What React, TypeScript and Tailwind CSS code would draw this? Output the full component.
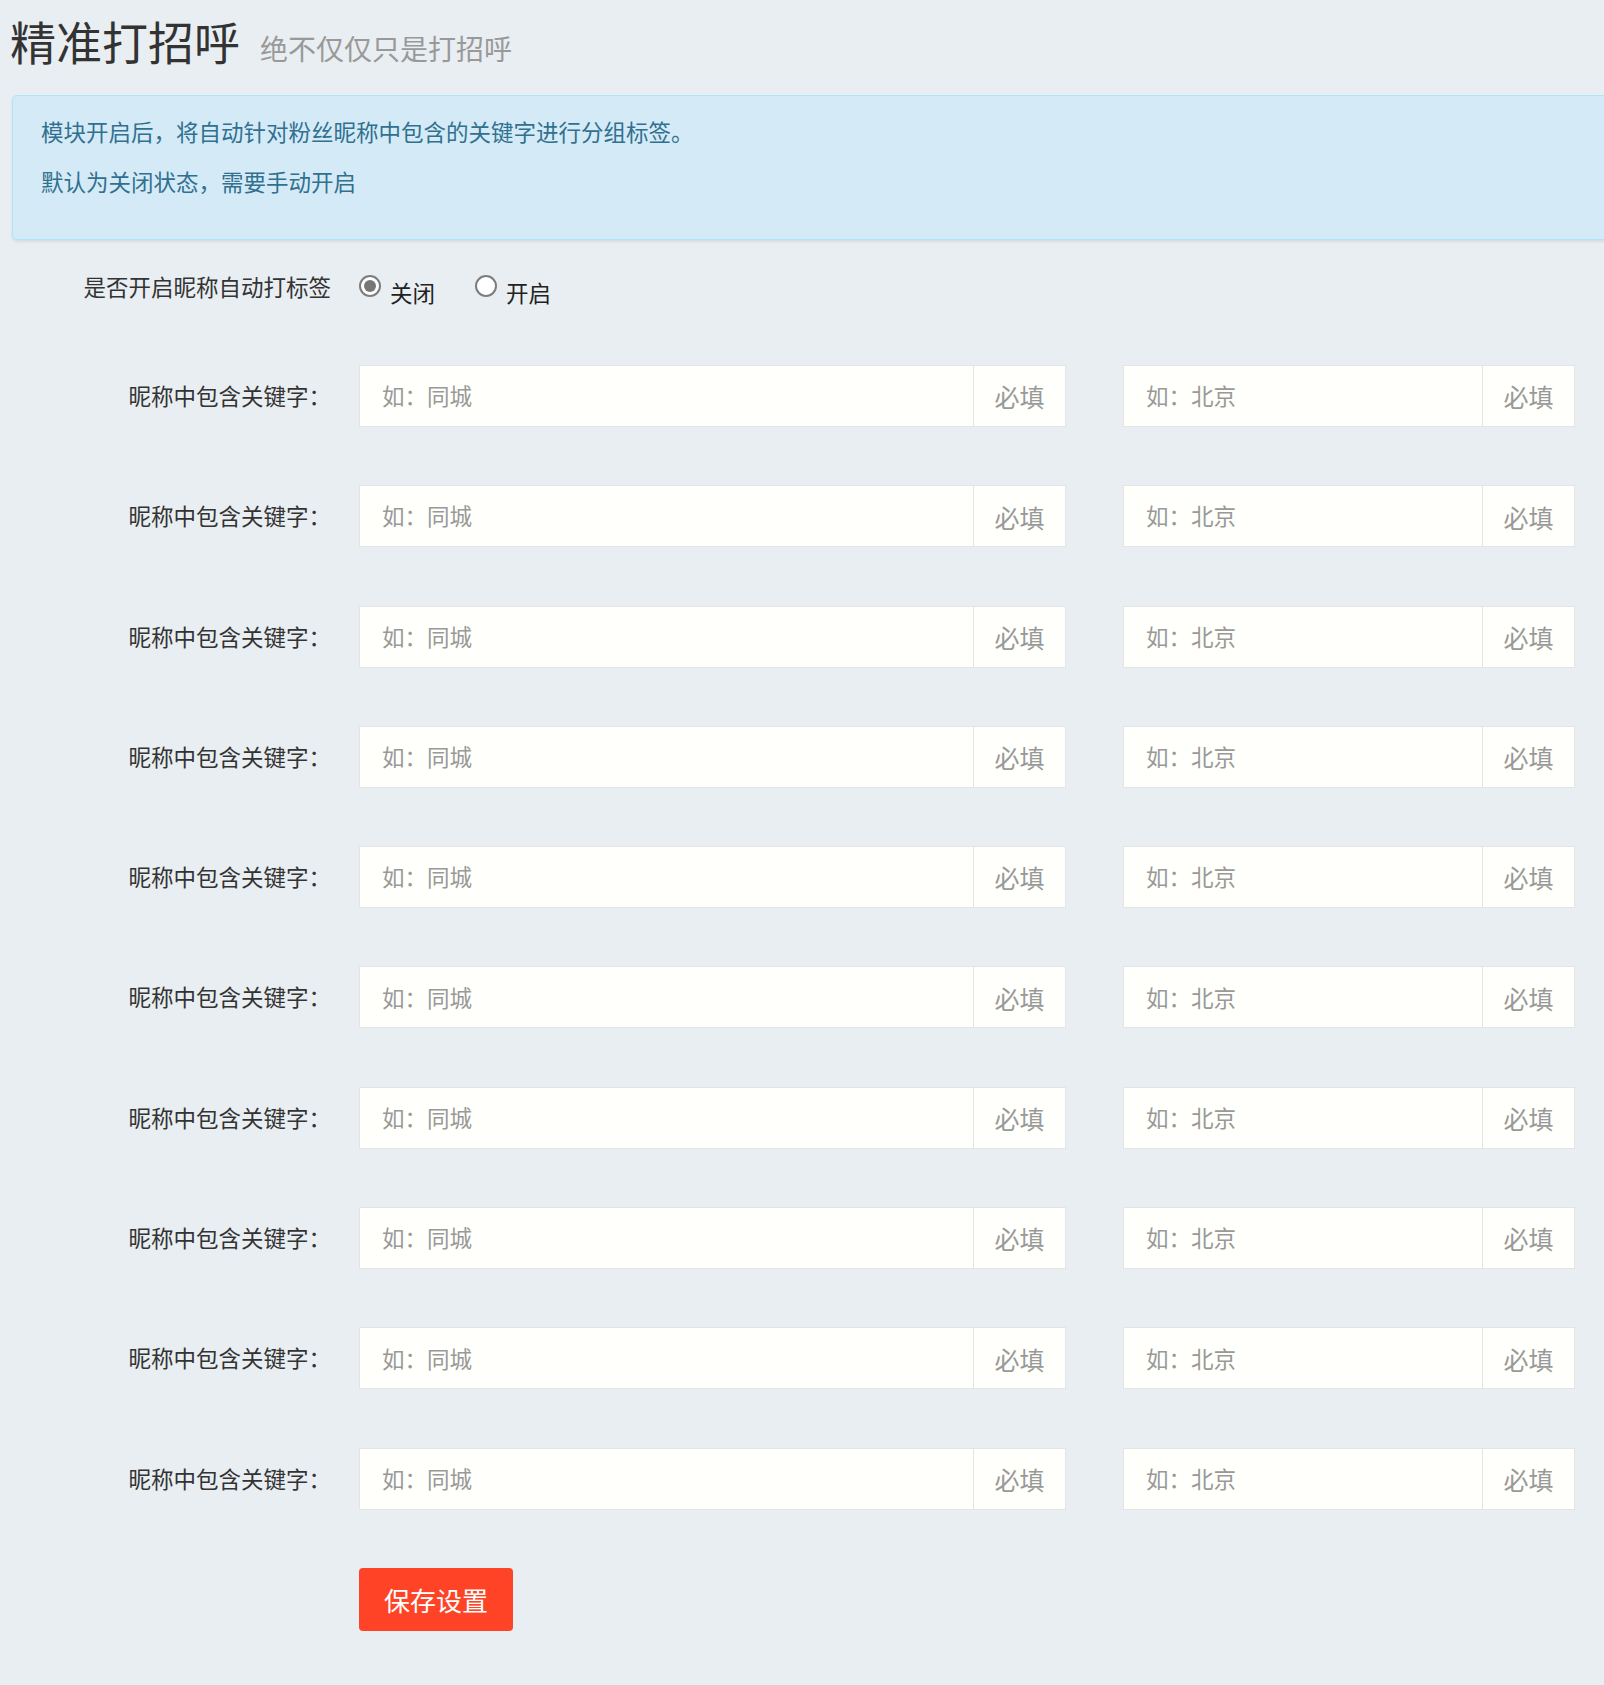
import { useState } from "react";

const rows = Array.from({ length: 10 }, (_, i) => i);

function Radio({ checked, label, onClick }: { checked: boolean; label: string; onClick: () => void }) {
  return (
    <label className="flex items-start cursor-pointer" onClick={onClick}>
      <span className="mt-[5px] flex h-[22px] w-[22px] items-center justify-center rounded-full border-2 border-[#7d7d7d] bg-white">
        {checked && <span className="h-[12px] w-[12px] rounded-full bg-[#777]"></span>}
      </span>
      <span className="ml-[9px] mt-[7px] text-[22.5px] leading-[30px] text-[#222]">{label}</span>
    </label>
  );
}

function InputGroup({ width, placeholder }: { width: string; placeholder: string }) {
  return (
    <div className={`flex h-[62px] border border-[#e4e4e4] bg-[#fffffb] ${width}`}>
      <input
        className="min-w-0 flex-1 bg-transparent pl-[22px] text-[22.5px] text-[#555] outline-none placeholder:text-[#999]"
        placeholder={placeholder}
      />
      <span className="flex w-[92px] items-center justify-center border-l border-[#e4e4e4] pt-[2px] text-[25px] text-[#999]">
        必填
      </span>
    </div>
  );
}

export default function App() {
  const [on, setOn] = useState(false);

  return (
    <div className="min-h-screen overflow-hidden bg-[#e9eef2] pb-[54px] font-['Noto_Sans_CJK_SC',sans-serif]">
      <h1 className="pl-[10px] pt-[15px] text-[46px] leading-[50px] font-normal text-[#333]">
        精准打招呼
        <small className="ml-[20px] text-[28px] text-[#999]">绝不仅仅只是打招呼</small>
      </h1>

      <div className="ml-[12px] mt-[22px] w-[1640px] rounded-[5px] border border-[#ade6f8] bg-[#d4ebf7] pb-[43px] pl-[28px] pt-[20px] text-[22.5px] leading-[30px] text-[#31708f] shadow-[0_2px_3px_rgba(0,0,0,0.08)]">
        <p>模块开启后，将自动针对粉丝昵称中包含的关键字进行分组标签。</p>
        <p className="mt-[20px]">默认为关闭状态，需要手动开启</p>
      </div>

      <form className="mt-[31px]" onSubmit={(e) => e.preventDefault()}>
        <div className="flex items-start">
          <span className="w-[331px] text-right text-[22.5px] leading-[30px] text-[#333]">是否开启昵称自动打标签</span>
          <div className="ml-[28px] flex gap-[40px] -mt-[1px]">
            <Radio checked={!on} label="关闭" onClick={() => setOn(false)} />
            <Radio checked={on} label="开启" onClick={() => setOn(true)} />
          </div>
        </div>

        <div className="mt-[58px] flex flex-col gap-[58.3px]">
          {rows.map((i) => (
            <div key={i} className="flex items-center">
              <span className="w-[331px] text-right text-[22.5px] leading-[30px] text-[#333] -mt-[2px]">昵称中包含关键字：</span>
              <div className="ml-[28px] flex gap-[57px]">
                <InputGroup width="w-[707px]" placeholder="如：同城" />
                <InputGroup width="w-[452px]" placeholder="如：北京" />
              </div>
            </div>
          ))}
        </div>

        <button
          type="submit"
          className="ml-[359px] mt-[58px] h-[63px] w-[154px] rounded-[4px] bg-[#ff4326] text-[26px] text-white"
        >
          保存设置
        </button>
      </form>
    </div>
  );
}
